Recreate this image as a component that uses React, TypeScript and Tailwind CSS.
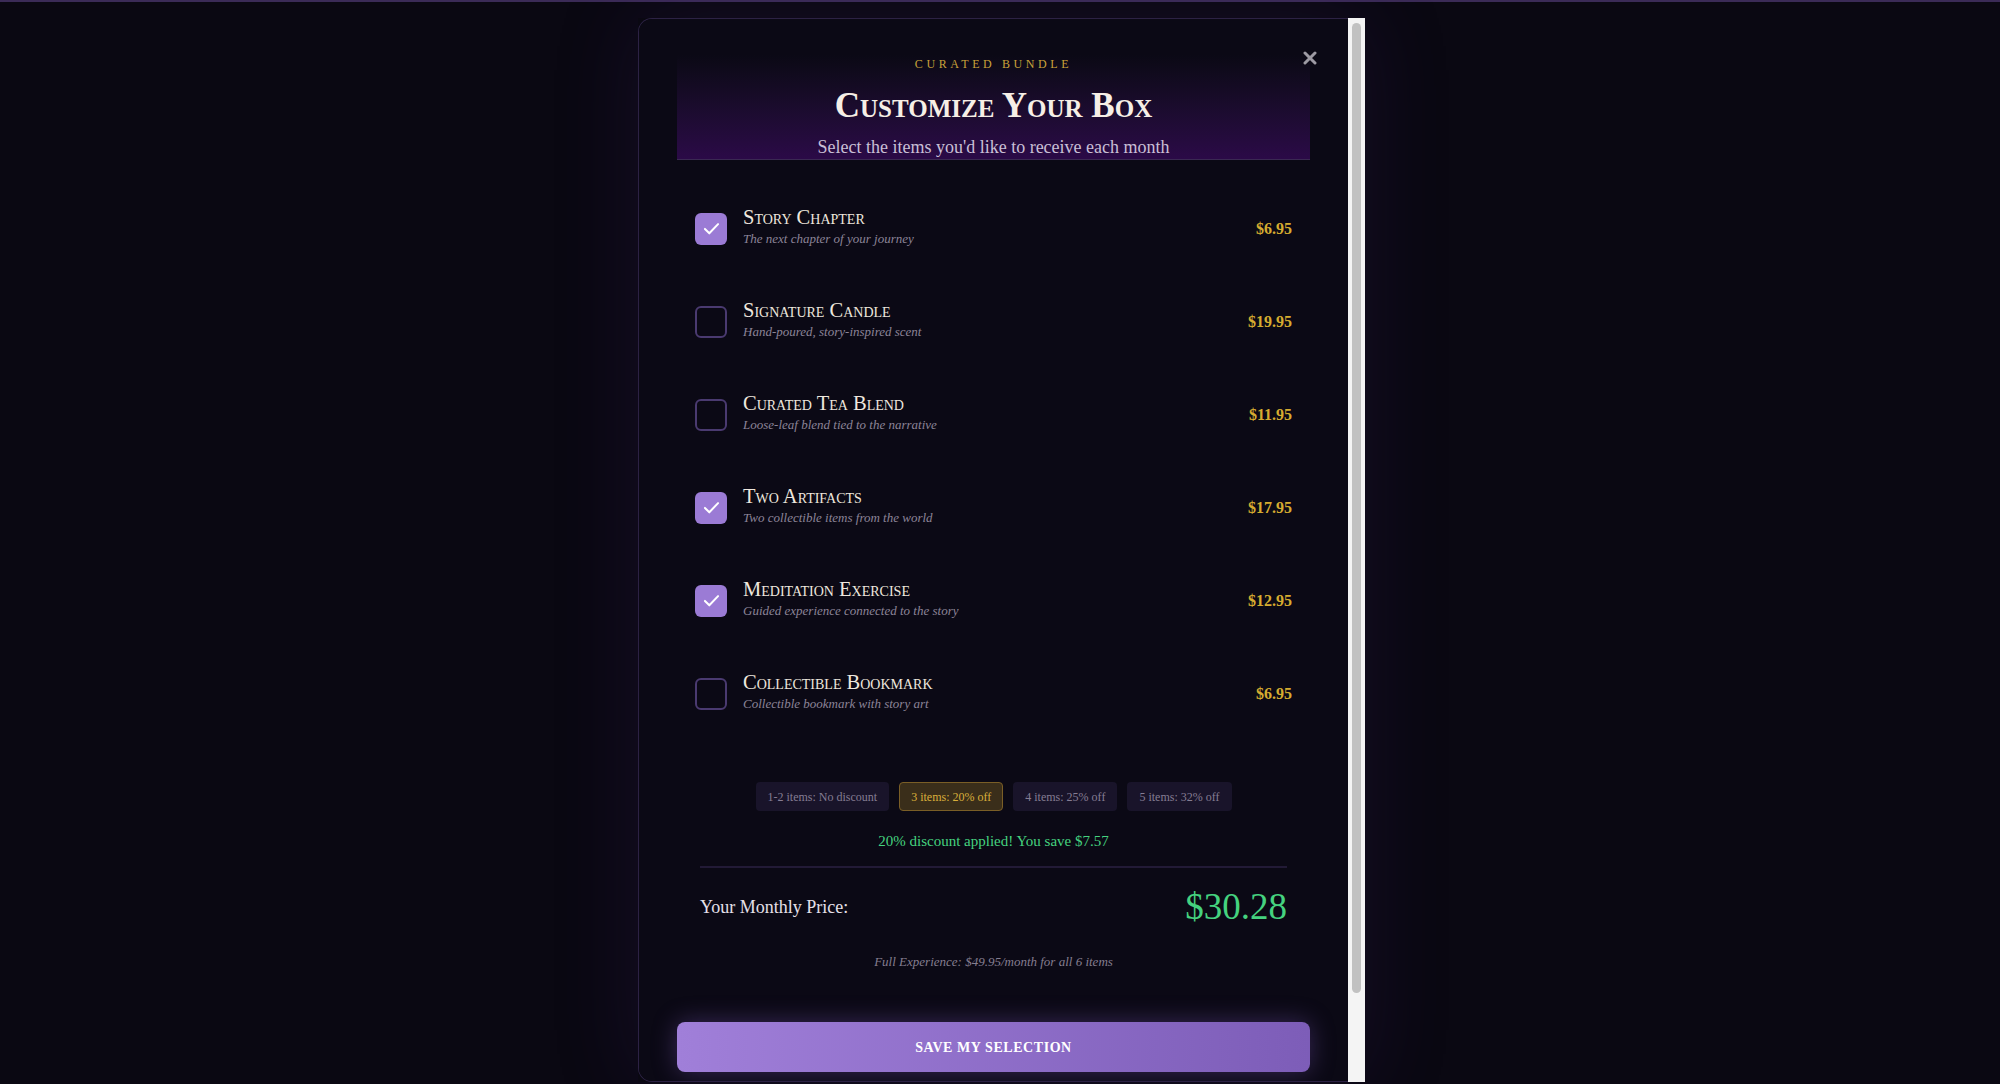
import { useState } from 'react'

const ITEMS = [
  { id: 'story', title: 'Story Chapter', desc: 'The next chapter of your journey', price: 6.95 },
  { id: 'candle', title: 'Signature Candle', desc: 'Hand-poured, story-inspired scent', price: 19.95 },
  { id: 'tea', title: 'Curated Tea Blend', desc: 'Loose-leaf blend tied to the narrative', price: 11.95 },
  { id: 'artifacts', title: 'Two Artifacts', desc: 'Two collectible items from the world', price: 17.95 },
  { id: 'meditation', title: 'Meditation Exercise', desc: 'Guided experience connected to the story', price: 12.95 },
  { id: 'bookmark', title: 'Collectible Bookmark', desc: 'Collectible bookmark with story art', price: 6.95 },
]

const TIERS = [
  { label: '1-2 items: No discount', pct: 0 },
  { label: '3 items: 20% off', pct: 20 },
  { label: '4 items: 25% off', pct: 25 },
  { label: '5 items: 32% off', pct: 32 },
]

function tierFor(n: number) {
  if (n >= 5) return TIERS[3]
  if (n === 4) return TIERS[2]
  if (n === 3) return TIERS[1]
  return TIERS[0]
}

export default function App() {
  const [selected, setSelected] = useState<string[]>(['story', 'artifacts', 'meditation'])

  const toggle = (id: string) =>
    setSelected((s) => (s.includes(id) ? s.filter((x) => x !== id) : [...s, id]))

  const subtotal = ITEMS.filter((i) => selected.includes(i.id)).reduce((a, i) => a + i.price, 0)
  const tier = tierFor(selected.length)
  const savings = (subtotal * tier.pct) / 100
  const total = subtotal - savings

  return (
    <div className="relative h-[1084px] overflow-hidden bg-[#0a0812] font-['Liberation_Serif',serif]">
      <div className="h-[2px] bg-[#3b2b57]" />
      <div className="flex justify-center pt-[16px]">
        <div className="ml-[3px] flex h-[1064px] w-[727px] shadow-[0_0_80px_rgba(70,40,130,0.18)]">
          {/* scroll area */}
          <div className="relative flex-1 overflow-y-auto rounded-l-[14px] border-y border-l border-[#2c2244] bg-[#0b0915] [scrollbar-width:none]">
            <button className="absolute right-[31px] top-[32px] p-0">
              <svg width="14" height="14" viewBox="0 0 14 14" fill="none" stroke="#9d9aa3" strokeWidth="3" strokeLinecap="round">
                <path d="M2 2 L12 12 M12 2 L2 12" />
              </svg>
            </button>

            <div className="px-[38px] pb-[109px] pt-[36px]">
              <div className="flex flex-col items-center border-b border-[#3a2952] bg-gradient-to-b from-[#0b0915] to-[#2b0a47]">
                <p className="text-[12px] uppercase leading-[18px] tracking-[0.3em] text-[#c9a23a]">Curated Bundle</p>
                <h2 className="mt-[13px] text-[35px] font-bold leading-[40px] text-[#f6efe6] [font-variant:small-caps]">
                  Customize Your Box
                </h2>
                <p className="mt-[9px] text-[18px] leading-[24px] text-[#c9bfd6]">
                  Select the items you'd like to receive each month
                </p>
              </div>

              <div className="mt-[22px] flex flex-col">
                {ITEMS.map((item) => {
                  const on = selected.includes(item.id)
                  return (
                    <div
                      key={item.id}
                      onClick={() => toggle(item.id)}
                      className="flex h-[93px] cursor-pointer items-center gap-4 px-[18px]"
                    >
                      <div
                        className={`flex h-[32px] w-[32px] shrink-0 items-center justify-center rounded-[6px] ${
                          on ? 'bg-[#9b7bd5]' : 'border-2 border-[#4a3a70]'
                        }`}
                      >
                        {on && (
                          <svg width="21" height="21" viewBox="0 0 24 24" fill="none" stroke="#ffffff" strokeWidth="2.3" strokeLinecap="round" strokeLinejoin="round">
                            <path d="M4.5 12.5l5 5L19.5 7" />
                          </svg>
                        )}
                      </div>
                      <div className="flex flex-1 flex-col pb-[4px]">
                        <span className="text-[20.5px] leading-[25px] text-[#eee7de] [font-variant:small-caps]">{item.title}</span>
                        <span className="text-[13px] italic leading-[18px] text-[#8c8498]">{item.desc}</span>
                      </div>
                      <span className="text-[16px] font-bold text-[#d6ac30]">${item.price.toFixed(2)}</span>
                    </div>
                  )
                })}
              </div>

              <div className="mt-[42px] flex justify-center gap-[10px]">
                {TIERS.map((t) => {
                  const active = t === tier
                  return (
                    <span
                      key={t.label}
                      className={`flex h-[29px] items-center rounded-[4px] border px-[11px] text-[12px] ${
                        active
                          ? 'border-[#7a5e26] bg-[#3a2e1a] text-[#d9ae3a]'
                          : 'border-transparent bg-[#19142a] text-[#857d93]'
                      }`}
                    >
                      {t.label}
                    </span>
                  )
                })}
              </div>

              <p className="mt-[20px] text-center text-[15px] leading-[20px] text-[#45d27f]">
                {tier.pct}% discount applied! You save ${savings.toFixed(2)}
              </p>

              <div className="mx-[23px] mt-[15px] border-t-2 border-[#221a36]">
                <div className="flex items-center justify-between pt-[15px]">
                  <span className="text-[18px] text-[#e6e0ea]">Your Monthly Price:</span>
                  <span className="text-[37px] leading-[48px] text-[#45d27f]">${total.toFixed(2)}</span>
                </div>
                <p className="mt-[21px] text-center text-[13px] italic leading-[20px] text-[#857e90]">
                  Full Experience: $49.95/month for all 6 items
                </p>
              </div>

              <button className="mt-[50px] flex h-[50px] w-full items-center justify-center rounded-[8px] bg-gradient-to-r from-[#a07fd9] to-[#7d5db8] text-[14px] font-semibold uppercase tracking-[0.04em] text-white shadow-[0_0_24px_rgba(140,100,210,0.35)]">
                Save My Selection
              </button>
            </div>
          </div>

          {/* classic scrollbar */}
          <div className="flex w-[17px] shrink-0 justify-center bg-[#f4f4f4] pt-[5px]">
            <div className="h-[970px] w-[9px] rounded-full bg-[#c1c1c1]" />
          </div>
        </div>
      </div>
    </div>
  )
}
